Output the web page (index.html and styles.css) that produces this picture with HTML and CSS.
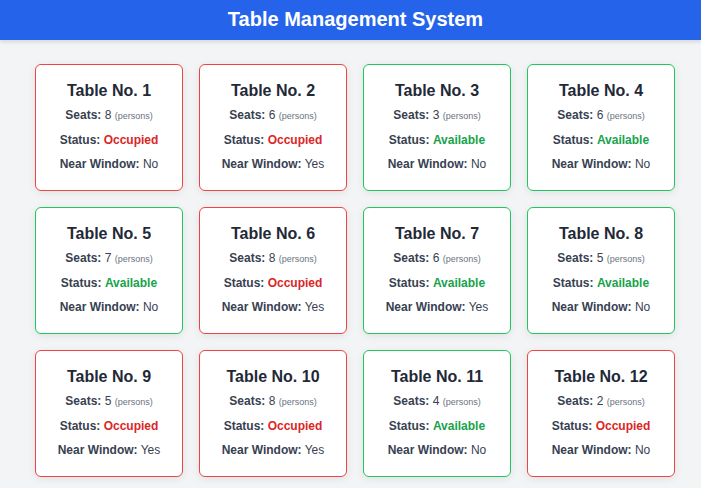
FILE: index.html
```html
<!DOCTYPE html>
<html lang="en">
<head>
<meta charset="utf-8">
<title>Table Management System</title>
<link rel="stylesheet" href="styles.css">
</head>
<body>
<header class="topbar"><h1 class="topbar-title">Table Management System</h1></header>
<main class="board">
  <div class="card occupied"><h2 class="card-title">Table No. 1</h2><p class="row"><b>Seats:</b> 8 <small class="unit">(persons)</small></p><p class="row"><b>Status:</b> <span class="st-occ">Occupied</span></p><p class="row"><b>Near Window:</b> No</p></div>
  <div class="card occupied"><h2 class="card-title">Table No. 2</h2><p class="row"><b>Seats:</b> 6 <small class="unit">(persons)</small></p><p class="row"><b>Status:</b> <span class="st-occ">Occupied</span></p><p class="row"><b>Near Window:</b> Yes</p></div>
  <div class="card available"><h2 class="card-title">Table No. 3</h2><p class="row"><b>Seats:</b> 3 <small class="unit">(persons)</small></p><p class="row"><b>Status:</b> <span class="st-av">Available</span></p><p class="row"><b>Near Window:</b> No</p></div>
  <div class="card available"><h2 class="card-title">Table No. 4</h2><p class="row"><b>Seats:</b> 6 <small class="unit">(persons)</small></p><p class="row"><b>Status:</b> <span class="st-av">Available</span></p><p class="row"><b>Near Window:</b> No</p></div>
  <div class="card available"><h2 class="card-title">Table No. 5</h2><p class="row"><b>Seats:</b> 7 <small class="unit">(persons)</small></p><p class="row"><b>Status:</b> <span class="st-av">Available</span></p><p class="row"><b>Near Window:</b> No</p></div>
  <div class="card occupied"><h2 class="card-title">Table No. 6</h2><p class="row"><b>Seats:</b> 8 <small class="unit">(persons)</small></p><p class="row"><b>Status:</b> <span class="st-occ">Occupied</span></p><p class="row"><b>Near Window:</b> Yes</p></div>
  <div class="card available"><h2 class="card-title">Table No. 7</h2><p class="row"><b>Seats:</b> 6 <small class="unit">(persons)</small></p><p class="row"><b>Status:</b> <span class="st-av">Available</span></p><p class="row"><b>Near Window:</b> Yes</p></div>
  <div class="card available"><h2 class="card-title">Table No. 8</h2><p class="row"><b>Seats:</b> 5 <small class="unit">(persons)</small></p><p class="row"><b>Status:</b> <span class="st-av">Available</span></p><p class="row"><b>Near Window:</b> No</p></div>
  <div class="card occupied"><h2 class="card-title">Table No. 9</h2><p class="row"><b>Seats:</b> 5 <small class="unit">(persons)</small></p><p class="row"><b>Status:</b> <span class="st-occ">Occupied</span></p><p class="row"><b>Near Window:</b> Yes</p></div>
  <div class="card occupied"><h2 class="card-title">Table No. 10</h2><p class="row"><b>Seats:</b> 8 <small class="unit">(persons)</small></p><p class="row"><b>Status:</b> <span class="st-occ">Occupied</span></p><p class="row"><b>Near Window:</b> Yes</p></div>
  <div class="card available"><h2 class="card-title">Table No. 11</h2><p class="row"><b>Seats:</b> 4 <small class="unit">(persons)</small></p><p class="row"><b>Status:</b> <span class="st-av">Available</span></p><p class="row"><b>Near Window:</b> No</p></div>
  <div class="card occupied"><h2 class="card-title">Table No. 12</h2><p class="row"><b>Seats:</b> 2 <small class="unit">(persons)</small></p><p class="row"><b>Status:</b> <span class="st-occ">Occupied</span></p><p class="row"><b>Near Window:</b> No</p></div>
</main>
</body>
</html>
```
FILE: styles.css
```css
* { box-sizing: border-box; }
html, body { margin: 0; padding: 0; }
body {
  background: #f3f4f6;
  font-family: "Liberation Sans", Arial, sans-serif;
  color: #374151;
}
.topbar {
  height: 40px;
  background: #2563eb;
  display: flex;
  align-items: center;
  justify-content: center;
  padding-left: 10px;
  box-shadow: 0 2px 4px rgba(0,0,0,0.12);
}
.topbar-title {
  margin: 0;
  color: #ffffff;
  font-size: 20px;
  font-weight: 700;
  line-height: 24px;
  position: relative;
  top: -1px;
}
.board {
  display: grid;
  grid-template-columns: repeat(4, 148px);
  gap: 16px;
  padding: 24px 0 24px 35px;
}
.card {
  background: #ffffff;
  border: 1px solid #ef4444;
  border-radius: 6px;
  box-shadow: 0 2px 8px rgba(0,0,0,0.08);
  padding: 14px 8px 16px;
  text-align: center;
  height: 127px;
}
.card.available { border-color: #22c55e; }
.card-title {
  margin: 0 0 4px;
  font-size: 16px;
  line-height: 24px;
  font-weight: 700;
  color: #1f2937;
}
.row {
  margin: 0;
  font-size: 12px;
  line-height: 16px;
  color: #374151;
}
.row + .row { margin-top: 8px; }
.row b { font-weight: 700; }
.unit { font-size: 9px; color: #6b7280; }
.st-occ { color: #dc2626; font-weight: 700; }
.st-av { color: #16a34a; font-weight: 700; }
```
